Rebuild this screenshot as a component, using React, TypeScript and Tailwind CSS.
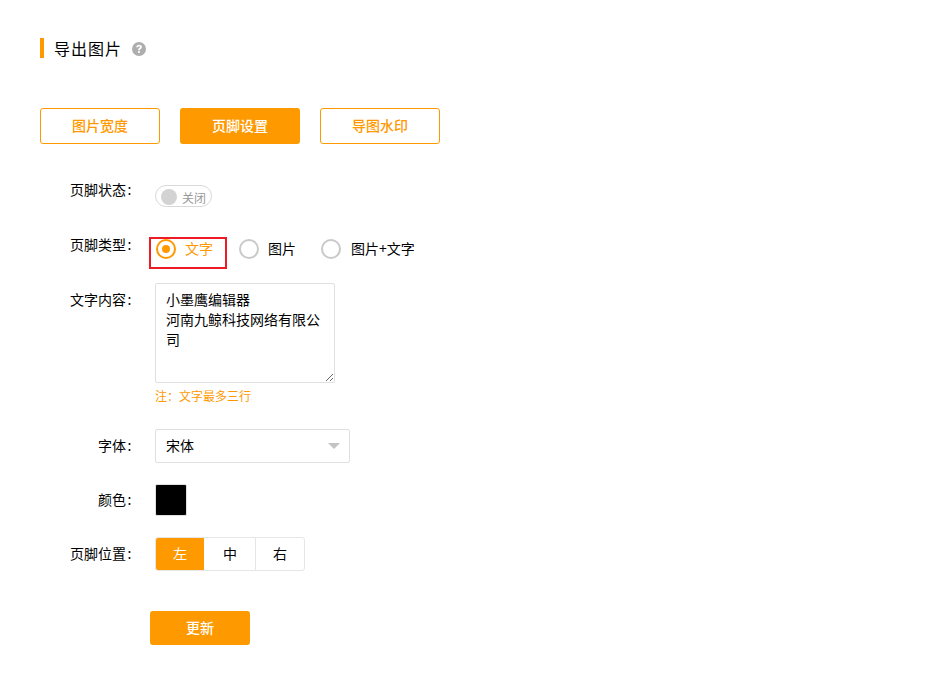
import React from "react";

function Label({ children, className = "" }: { children: React.ReactNode; className?: string }) {
  return (
    <div className={"w-[93px] shrink-0 text-right text-[14px] leading-[20px] text-black " + className}>
      {children}
      <span className="inline-block w-[7px] text-center">:</span>
    </div>
  );
}

function Radio({ checked, label, className = "", textClass = "ml-[9px]" }: { checked?: boolean; label: string; className?: string; textClass?: string }) {
  return (
    <div className={"flex items-start " + className}>
      <span
        className={
          "flex h-[20px] w-[20px] items-center justify-center rounded-full border-2 bg-white " +
          (checked ? "border-[#ff9900]" : "border-[#c9c9c9]")
        }
      >
        {checked && <span className="h-[8px] w-[8px] rounded-full bg-[#ff9900]" />}
      </span>
      <span className={"-mt-[1px] text-[14px] leading-[20px] " + textClass + " " + (checked ? "text-[#ff9900]" : "text-black")}>
        {label}
      </span>
    </div>
  );
}

export default function App() {
  return (
    <div className="min-h-[681px] w-[939px] bg-white pl-[40px] pt-[38px] font-['Noto_Sans_CJK_SC','Liberation_Sans',sans-serif]">
      <div className="flex h-[20px] items-center border-l-4 border-[#ff9900] pl-[10px]">
        <span className="text-[16px] leading-[20px] tracking-[1px] text-black">导出图片</span>
        <svg className="ml-[10px] mt-[1px]" width="14" height="14" viewBox="0 0 14 14">
          <circle cx="7" cy="7" r="7" fill="#aeaeae" />
          <path d="M4.2 5.3C4.3 3.6 5.5 2.7 7.1 2.7c1.6 0 2.8.9 2.8 2.3 0 1-.6 1.6-1.3 2-.6.4-.8.7-.8 1.3H6.1c0-1.1.3-1.7 1.1-2.2.5-.3.9-.6.9-1.1 0-.5-.4-.8-1-.8-.6 0-1 .4-1.1 1.1H4.2z" fill="#fff" />
          <rect x="6.1" y="9" width="1.8" height="1.9" fill="#fff" />
        </svg>
      </div>

      <div className="mt-[50px] flex gap-[20px]">
        <div className="flex h-[36px] w-[120px] items-center justify-center rounded-[3px] border border-[#ff9900] pb-[2px] text-[14px] font-medium text-[#ff9900]">
          图片宽度
        </div>
        <div className="flex h-[36px] w-[120px] items-center justify-center rounded-[3px] bg-[#ff9900] pb-[2px] text-[14px] font-medium text-white">
          页脚设置
        </div>
        <div className="flex h-[36px] w-[120px] items-center justify-center rounded-[3px] border border-[#ff9900] pb-[2px] text-[14px] font-medium text-[#ff9900]">
          导图水印
        </div>
      </div>

      <div className="mt-[37px] flex">
        <Label className="-mt-[2px]">页脚状态</Label>
        <div className="ml-[22px] mt-[4px] flex h-[22px] w-[57px] items-center rounded-full border border-[#d9d9d9] pl-[5px]">
          <span className="mt-[1px] h-[16px] w-[16px] rounded-full bg-[#d3d3d3]" />
          <span className="ml-[5px] mt-[3px] text-[12px] leading-[16px] text-[#999]">关闭</span>
        </div>
      </div>

      <div className="mt-[30px] flex">
        <Label className="-mt-[3px]">页脚类型</Label>
        <div className="relative ml-[22px] flex h-[32px] items-start pt-[2px]">
          <div className="absolute left-[-6px] top-0 h-[32px] w-[78px] border-2 border-[#ed1c24]" />
          <Radio checked label="文字" className="ml-[1px]" />
          <Radio label="图片" className="ml-[26px]" />
          <Radio label="图片+文字" className="ml-[25px]" textClass="ml-[10px]" />
        </div>
      </div>

      <div className="mt-[14px] flex">
        <Label className="mt-[6px]">文字内容</Label>
        <div className="ml-[22px]">
          <textarea
            readOnly
            className="block h-[100px] w-[180px] rounded-[2px] border border-[#e0e0e0] px-[10px] py-[5px] text-[14px] leading-[20px] text-black outline-none"
            value={"小墨鹰编辑器\n河南九鲸科技网络有限公司"}
          />
          <div className="mt-[4px] text-[12px] leading-[18px] text-[#ff9900]">注：文字最多三行</div>
        </div>
      </div>

      <div className="mt-[24px] flex">
        <Label className="mt-[6px]">字体</Label>
        <div className="ml-[22px] flex h-[34px] w-[195px] items-center justify-between rounded-[2px] border border-[#e0e0e0] pl-[10px] pr-[9px]">
          <span className="mb-[2px] text-[14px] leading-[20px] text-black">宋体</span>
          <span className="h-0 w-0 border-x-[6px] border-t-[6px] border-x-transparent border-t-[#c4c4c4]" />
        </div>
      </div>

      <div className="mt-[21px] flex">
        <Label className="mt-[5px]">颜色</Label>
        <div className="ml-[22px] h-[32px] w-[32px] rounded-[2px] border border-[#e0e0e0] bg-black" />
      </div>

      <div className="mt-[21px] flex">
        <Label className="mt-[6px]">页脚位置</Label>
        <div className="ml-[22px] flex h-[34px] w-[150px] overflow-hidden rounded-[3px] border border-[#e6e6e6] text-[14px] text-black">
          <div className="flex w-[48px] items-center justify-center bg-[#ff9900] pb-[2px] text-white">左</div>
          <div className="flex w-[52px] items-center justify-center border-r border-[#e6e6e6] pb-[2px] pl-[1px]">中</div>
          <div className="flex flex-1 items-center justify-center pb-[2px]">右</div>
        </div>
      </div>

      <div className="ml-[110px] mt-[40px] flex h-[34px] w-[100px] items-center justify-center rounded-[3px] bg-[#ff9900] pb-[2px] text-[14px] font-medium text-white">
        更新
      </div>
    </div>
  );
}
